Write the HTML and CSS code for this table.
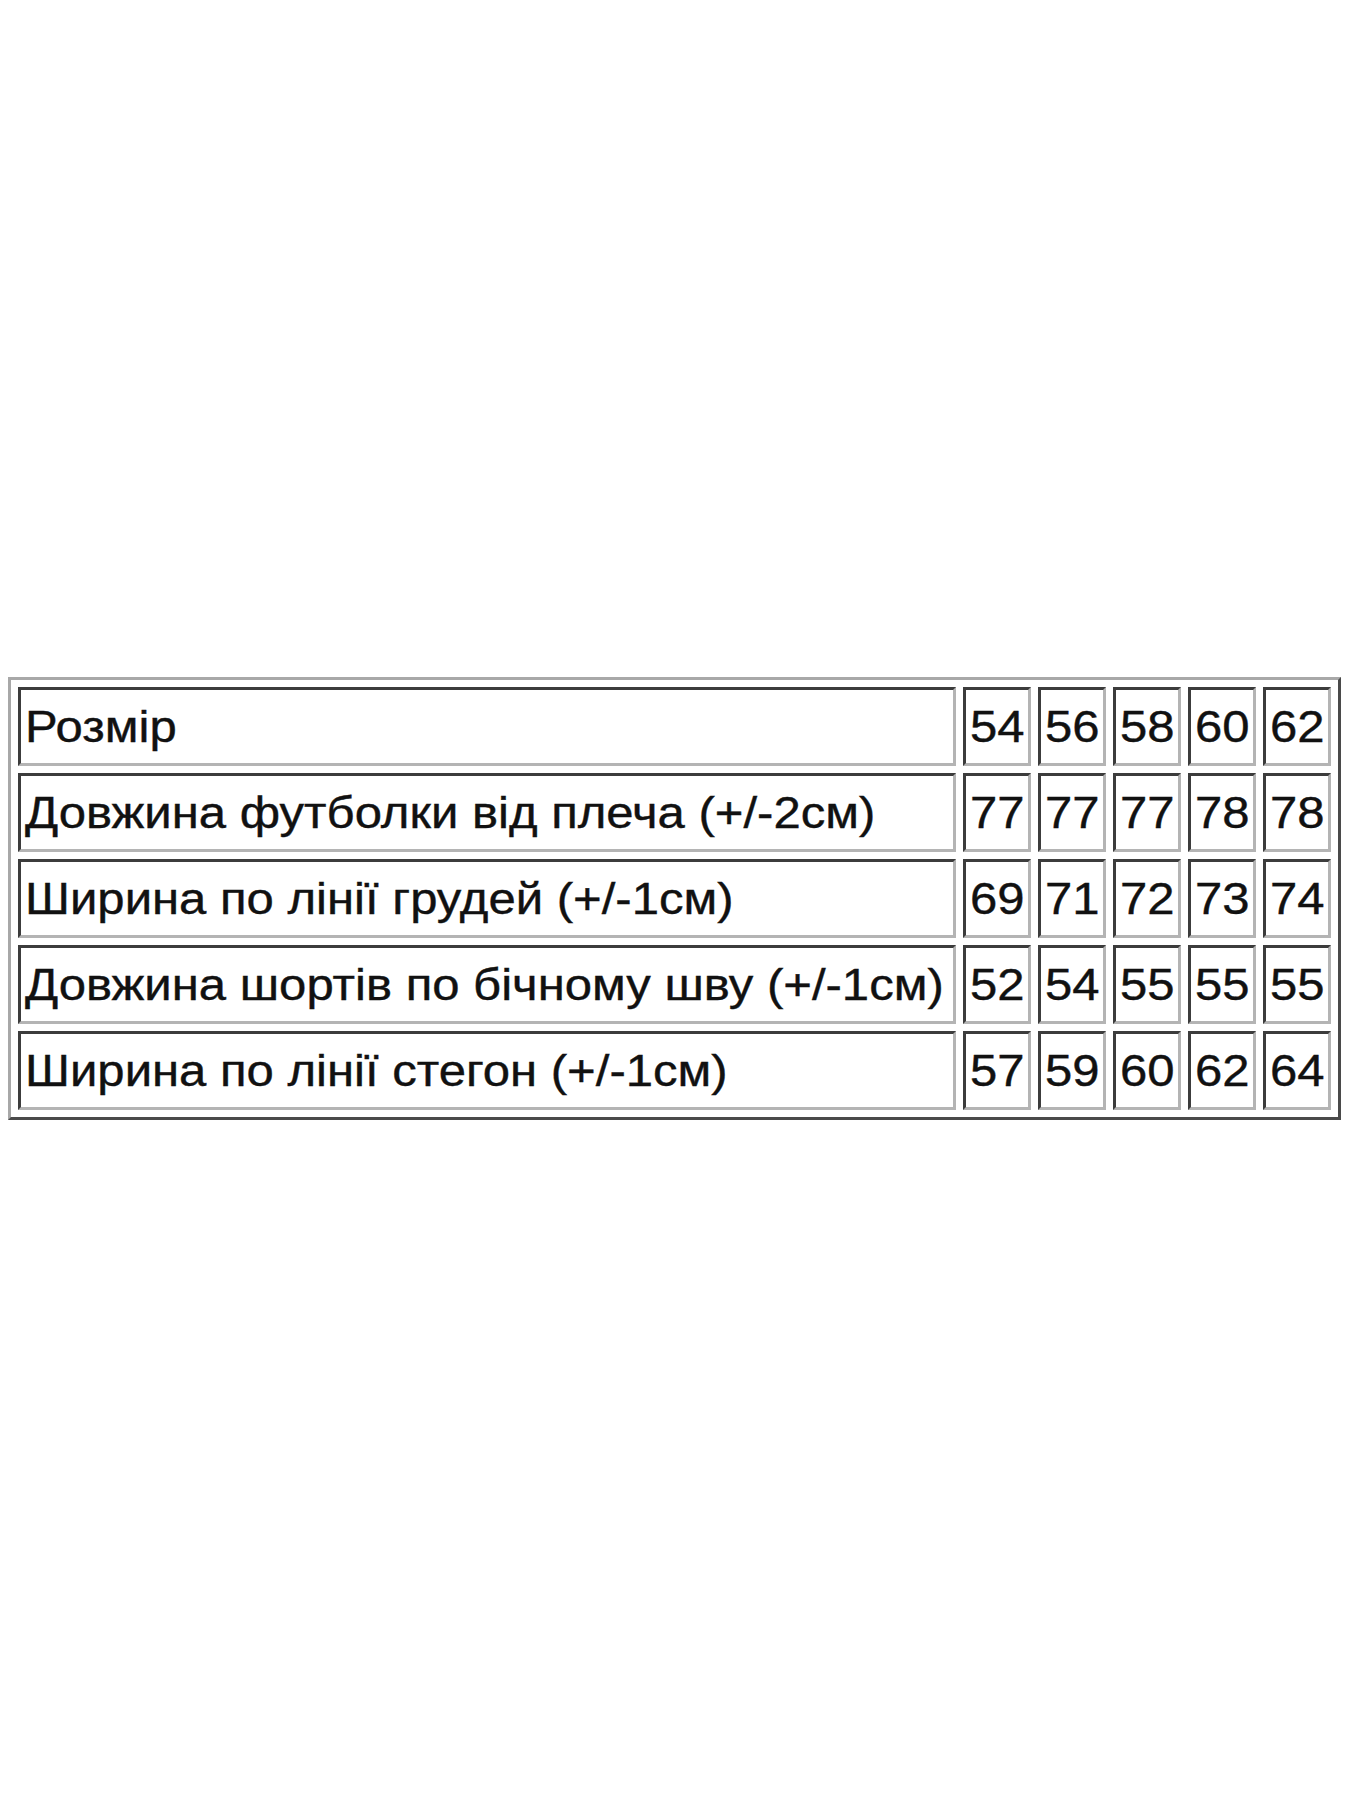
FILE: index.html
```html
<!DOCTYPE html>
<html lang="uk">
<head>
<meta charset="utf-8">
<title>Розмірна сітка</title>
<link rel="stylesheet" href="styles.css">
</head>
<body>
<div class="page">
  <table class="sizes">
    <colgroup>
      <col class="c-label">
      <col class="c-num"><col class="c-num"><col class="c-num"><col class="c-num"><col class="c-num">
    </colgroup>
    <tr><td><span class="t">Розмір</span></td><td><span class="t">54</span></td><td><span class="t">56</span></td><td><span class="t">58</span></td><td><span class="t">60</span></td><td><span class="t">62</span></td></tr>
    <tr><td><span class="t">Довжина футболки від плеча (+/-2см)</span></td><td><span class="t">77</span></td><td><span class="t">77</span></td><td><span class="t">77</span></td><td><span class="t">78</span></td><td><span class="t">78</span></td></tr>
    <tr><td><span class="t">Ширина по лінії грудей (+/-1см)</span></td><td><span class="t">69</span></td><td><span class="t">71</span></td><td><span class="t">72</span></td><td><span class="t">73</span></td><td><span class="t">74</span></td></tr>
    <tr><td><span class="t">Довжина шортів по бічному шву (+/-1см)</span></td><td><span class="t">52</span></td><td><span class="t">54</span></td><td><span class="t">55</span></td><td><span class="t">55</span></td><td><span class="t">55</span></td></tr>
    <tr><td><span class="t">Ширина по лінії стегон (+/-1см)</span></td><td><span class="t">57</span></td><td><span class="t">59</span></td><td><span class="t">60</span></td><td><span class="t">62</span></td><td><span class="t">64</span></td></tr>
  </table>
</div>
</body>
</html>
```

FILE: styles.css
```css
html, body {
  margin: 0;
  padding: 0;
  background: #ffffff;
}

.page {
  padding: 677px 0 0 8px;
}

.sizes {
  table-layout: fixed;
  width: 1333px;
  border-collapse: separate;
  border-spacing: 7px;
  border: 3px solid;
  border-color: #a8a8a8 #4a4a4a #4a4a4a #a8a8a8;
  font-family: "Liberation Sans", Arial, sans-serif;
  font-size: 45px;
  color: #111;
}

.c-label { width: 937px; }
.c-num { width: 68px; }

.sizes td {
  box-sizing: border-box;
  height: 79px;
  padding: 0 3px 0 4px;
  border: 3px solid;
  border-color: #3c3c3c #b4b4b4 #b4b4b4 #3c3c3c;
  white-space: nowrap;
  overflow: hidden;
  vertical-align: middle;
  line-height: 1.15;
}

.t {
  display: inline-block;
  transform: scaleX(1.09);
  transform-origin: left center;
  -webkit-text-stroke: 0.4px #111;
}
```
